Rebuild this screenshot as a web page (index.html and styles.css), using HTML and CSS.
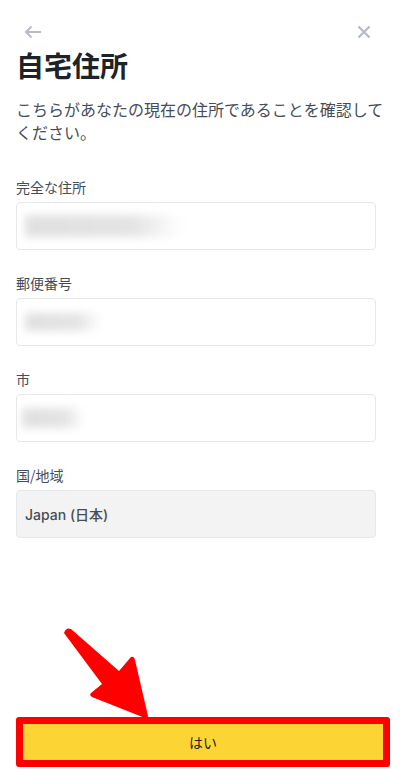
FILE: index.html
```html
<!DOCTYPE html>
<html lang="ja">
<head>
<meta charset="utf-8">
<title>自宅住所</title>
<link rel="stylesheet" href="styles.css">
</head>
<body>
<div class="page">
  <div class="topbar">
    <svg class="icon-back" width="18" height="14" viewBox="0 0 18 14"><path d="M17 7H2M7.5 1.5L2 7l5.5 5.5" fill="none" stroke="#b7bdc6" stroke-width="2"/></svg>
    <svg class="icon-close" width="14" height="14" viewBox="0 0 14 14"><path d="M1.5 1.5l11 11M12.5 1.5l-11 11" fill="none" stroke="#b7bdc6" stroke-width="2.4"/></svg>
  </div>
  <h1 class="title">自宅住所</h1>
  <p class="desc">こちらがあなたの現在の住所であることを確認してください。</p>

  <div class="field">
    <div class="label">完全な住所</div>
    <div class="input"><div class="blur b1"></div></div>
  </div>
  <div class="field">
    <div class="label">郵便番号</div>
    <div class="input"><div class="blur b2"></div></div>
  </div>
  <div class="field">
    <div class="label">市</div>
    <div class="input"><div class="blur b3"></div></div>
  </div>
  <div class="field">
    <div class="label">国/地域</div>
    <div class="input disabled"><span class="value">Japan (日本)</span></div>
  </div>

  <div class="btn-wrap">
    <button class="btn">はい</button>
  </div>

  <svg class="arrow" width="400" height="782" viewBox="0 0 400 782">
    <path d="M64 633 Q66 627 71 629 L119 671 L131 657 Q134 656 135 660 L148 716 Q148 719 145 718 L92 697 Q89 695 91 693 L102 684 Z" fill="#ff0000"/>
  </svg>
</div>
</body>
</html>
```

FILE: styles.css
```css
* { box-sizing: border-box; }
html, body { margin: 0; padding: 0; background: #ffffff; }
body {
  font-family: "Noto Sans CJK JP", "Noto Sans", sans-serif;
  color: #1e2329;
}
.page {
  position: relative;
  width: 400px;
  height: 782px;
  padding: 0 24px 0 16px;
  display: flex;
  flex-direction: column;
}
.topbar {
  display: flex;
  justify-content: space-between;
  align-items: center;
  height: 24px;
  margin-top: 20px;
  padding: 0 5px 0 8px;
}
.title {
  margin: 3px 0 0;
  font-size: 28px;
  line-height: 36px;
  font-weight: 700;
  color: #1e2329;
}
.desc {
  margin: 15px 0 0;
  font-size: 16px;
  line-height: 23px;
  color: #474d57;
  width: 372px;
}
.field { margin-top: 33px; }
.field + .field { margin-top: 23px; }
.label {
  font-size: 14px;
  line-height: 20px;
  color: #474d57;
  margin-bottom: 5px;
}
.input {
  height: 48px;
  border: 1px solid #e6e8ea;
  border-radius: 4px;
  display: flex;
  align-items: center;
  padding: 0 8px;
  overflow: hidden;
}
.input.disabled { background: #f3f3f3; }
.value {
  font-family: "Inter", "Noto Sans CJK JP", sans-serif;
  font-size: 14px;
  font-weight: 500;
  color: #474d57;
}
.blur {
  height: 22px;
  background: linear-gradient(90deg, #e0e0e0 0%, #e4e4e4 70%, rgba(238,238,238,0) 100%);
  filter: blur(4px);
  border-radius: 3px;
}
.b1 { width: 156px; }
.b2 { width: 76px; height: 18px; }
.b3 { width: 62px; height: 20px; margin-left: -3px; }
.btn-wrap {
  margin-top: auto;
  margin-bottom: 15px;
  width: 374px;
  border: 7px solid #ff0000;
  border-radius: 3px;
}
.btn {
  display: block;
  width: 100%;
  height: 36px;
  border: 0;
  background: #fcd535;
  font-family: "Noto Sans CJK JP", sans-serif;
  font-size: 14px;
  color: #1e2329;
  padding: 0;
}
.arrow {
  position: absolute;
  left: 0;
  top: 0;
  pointer-events: none;
}
```
